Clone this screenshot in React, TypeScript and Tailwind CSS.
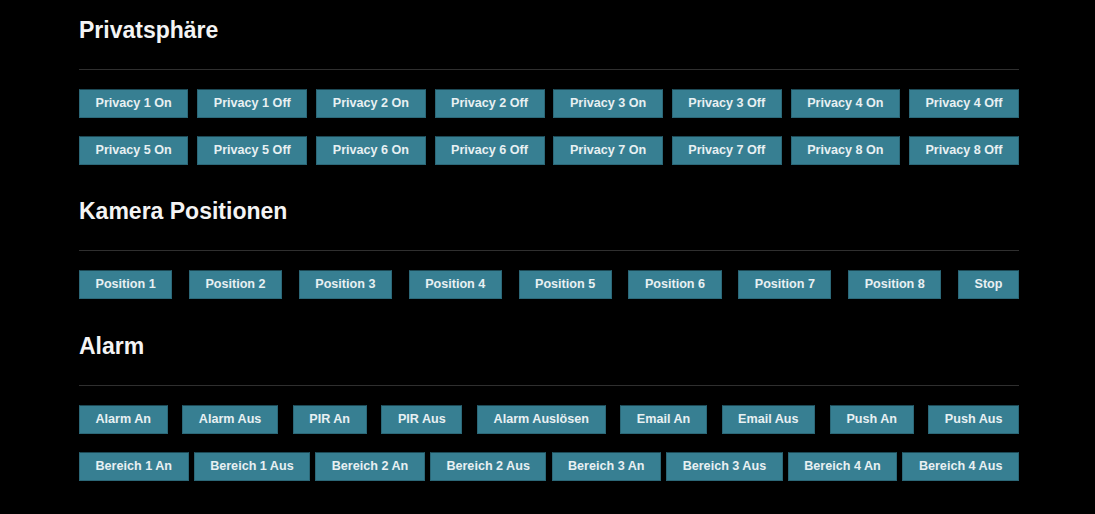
const privacyRows = [
  ['Privacy 1 On', 'Privacy 1 Off', 'Privacy 2 On', 'Privacy 2 Off', 'Privacy 3 On', 'Privacy 3 Off', 'Privacy 4 On', 'Privacy 4 Off'],
  ['Privacy 5 On', 'Privacy 5 Off', 'Privacy 6 On', 'Privacy 6 Off', 'Privacy 7 On', 'Privacy 7 Off', 'Privacy 8 On', 'Privacy 8 Off'],
];

const positionRows = [
  ['Position 1', 'Position 2', 'Position 3', 'Position 4', 'Position 5', 'Position 6', 'Position 7', 'Position 8', 'Stop'],
];

const alarmRows = [
  ['Alarm An', 'Alarm Aus', 'PIR An', 'PIR Aus', 'Alarm Auslösen', 'Email An', 'Email Aus', 'Push An', 'Push Aus'],
  ['Bereich 1 An', 'Bereich 1 Aus', 'Bereich 2 An', 'Bereich 2 Aus', 'Bereich 3 An', 'Bereich 3 Aus', 'Bereich 4 An', 'Bereich 4 Aus'],
];

function ActionButton({ label }: { label: string }) {
  return (
    <button className="h-[29px] px-[15.5px] bg-[#377f92] border border-[#2c6878] border-t-[#1c4955] text-[#e8f0f2] text-[12.6px] font-bold leading-none whitespace-nowrap">
      {label}
    </button>
  );
}

function Section({ title, rows, className }: { title: string; rows: string[][]; className?: string }) {
  return (
    <section className={className}>
      <h2 className="text-[23px] leading-[30px] font-bold text-[#f4f4f4]">{title}</h2>
      <div className="mt-[24px] h-px bg-[#2f2f2f]" />
      <div className="mt-[19px] flex flex-col gap-[18px]">
        {rows.map((row, i) => (
          <div key={i} className="flex justify-between">
            {row.map(label => (
              <ActionButton key={label} label={label} />
            ))}
          </div>
        ))}
      </div>
    </section>
  );
}

export default function App() {
  return (
    <div className="min-h-screen bg-black" style={{ fontFamily: '"Liberation Sans", Arial, sans-serif' }}>
      <div className="ml-[79px] w-[940px] pt-[15px] pb-8">
        <Section title="Privatsphäre" rows={privacyRows} />
        <Section title="Kamera Positionen" rows={positionRows} className="mt-[31px]" />
        <Section title="Alarm" rows={alarmRows} className="mt-[32px]" />
      </div>
    </div>
  );
}
